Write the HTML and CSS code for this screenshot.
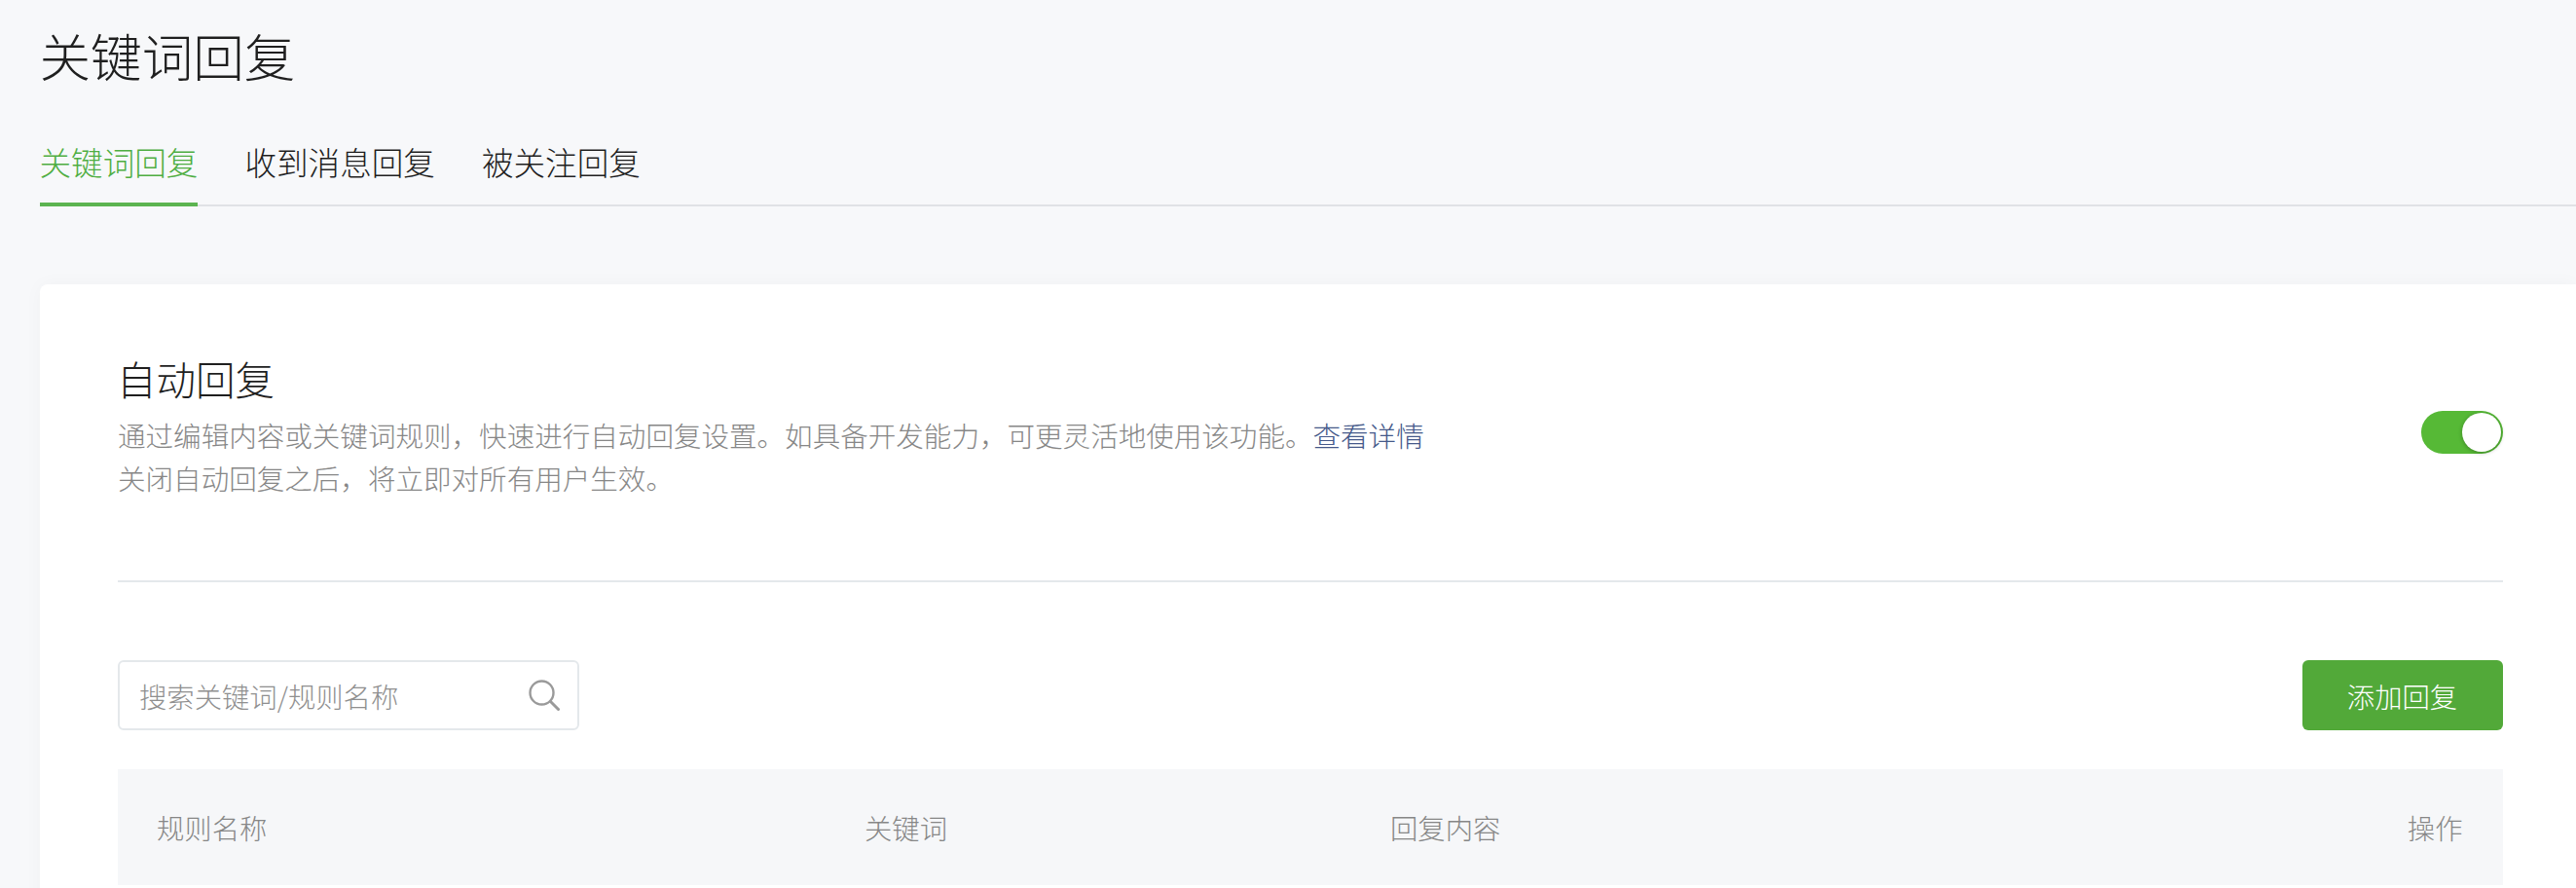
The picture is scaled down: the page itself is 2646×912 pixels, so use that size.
FILE: index.html
```html
<!DOCTYPE html>
<html lang="zh-CN">
<head>
<meta charset="utf-8">
<title>关键词回复</title>
<link rel="stylesheet" href="styles.css">
</head>
<body>
<main class="page">
  <h1 class="title">关键词回复</h1>
  <nav class="tabs">
    <a class="tab tab-active">关键词回复</a>
    <a class="tab">收到消息回复</a>
    <a class="tab">被关注回复</a>
  </nav>
  <section class="card">
    <header class="head">
      <div class="intro">
        <h2 class="heading">自动回复</h2>
        <p class="desc">通过编辑内容或关键词规则，快速进行自动回复设置。如具备开发能力，可更灵活地使用该功能。<a class="link">查看详情</a></p>
        <p class="desc">关闭自动回复之后，将立即对所有用户生效。</p>
      </div>
      <div class="switch"><span class="knob"></span></div>
    </header>
    <div class="toolbar">
      <label class="search">
        <span class="placeholder">搜索关键词/规则名称</span>
        <svg class="search-icon" width="32" height="32" viewBox="0 0 32 32" fill="none" stroke="#9a9a9a" stroke-width="2.4">
          <circle cx="13.5" cy="13.5" r="12"/>
          <path d="M22.5 22.5L30.5 30.5" stroke-width="3" stroke-linecap="round"/>
        </svg>
      </label>
      <button class="add">添加回复</button>
    </div>
    <div class="thead">
      <span>规则名称</span>
      <span>关键词</span>
      <span>回复内容</span>
      <span>操作</span>
    </div>
  </section>
</main>
</body>
</html>
```
FILE: styles.css
```css
* { box-sizing: border-box; }
html, body { margin: 0; height: 912px; overflow: hidden; }
body {
  background: #f7f8fa;
  color: #1f1f1f;
  font-family: "Noto Sans CJK SC", "Noto Sans", sans-serif;
  font-weight: 300;
}
.page { padding: 19px 0 0 40.5px; }
.title { margin: 0; font-size: 52.6px; line-height: 74px; font-weight: 300; }
.tabs {
  display: flex;
  gap: 48px;
  margin-top: 51px;
  height: 68px;
  border-bottom: 2px solid #e0e2e6;
}
.tab { font-size: 32.6px; line-height: 44px; height: 68px; padding-bottom: 20px; border-bottom: 4px solid transparent; }
.tab-active { color: #4fae42; border-bottom-color: #5cb450; }
.card {
  margin-top: 80px;
  padding: 69px 75.5px 0 80.5px;
  background: #fff;
  border-radius: 8px 0 0 0;
  height: 640px;
  box-shadow: 0 0 20px rgba(0,0,0,.03);
}
.head {
  display: flex;
  justify-content: space-between;
  align-items: flex-start;
  padding-bottom: 83px;
  border-bottom: 2px solid #e4e8eb;
}
.heading { margin: 0 0 8px -1px; font-size: 40.5px; line-height: 56px; font-weight: 300; }
.desc { margin: 0; font-size: 28.55px; line-height: 44px; color: #878787; }
.link { color: #45598a; }
.switch {
  position: relative;
  width: 84px;
  height: 44px;
  margin-top: 61px;
  border-radius: 22px;
  background: #56b936;
}
.knob {
  position: absolute;
  top: 2px;
  right: 2px;
  width: 40px;
  height: 40px;
  border-radius: 50%;
  background: #fff;
  box-shadow: 0 1px 4px rgba(0,0,0,.3);
}
.toolbar {
  display: flex;
  justify-content: space-between;
  margin-top: 80px;
}
.search {
  display: flex;
  align-items: center;
  justify-content: space-between;
  width: 473.5px;
  height: 72px;
  padding: 0 18px 0 20px;
  border: 2px solid #e4e8eb;
  border-radius: 6px;
  background: #fff;
}
.placeholder { font-size: 28.35px; color: #8f8f8f; }
.search-icon { flex: none; }
.add {
  width: 206px;
  height: 72px;
  border: 0;
  border-radius: 6px;
  background: #52a939;
  color: #fff;
  font: inherit;
  font-size: 28.35px;
  font-weight: 300;
}
.thead {
  display: grid;
  grid-template-columns: 727px 540px 1fr auto;
  align-items: center;
  height: 119px;
  margin-top: 40px;
  padding: 0 41px 0 40px;
  background: #f6f7f9;
  font-size: 28.35px;
  color: #878787;
}
```
